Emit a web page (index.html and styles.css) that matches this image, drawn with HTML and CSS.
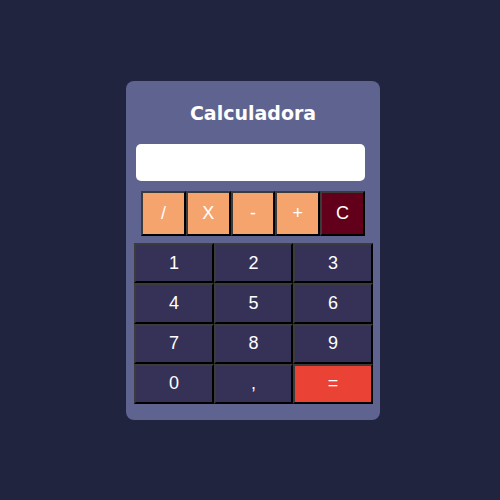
FILE: index.html
```html
<!DOCTYPE html>
<html lang="pt">
<head>
<meta charset="utf-8">
<title>Calculadora</title>
<link rel="stylesheet" href="styles.css">
</head>
<body>
<div class="calc">
  <h1 class="title">Calculadora</h1>
  <div class="display"></div>
  <div class="ops">
    <button class="btn op">/</button>
    <button class="btn op">X</button>
    <button class="btn op">-</button>
    <button class="btn op">+</button>
    <button class="btn clear">C</button>
  </div>
  <div class="keys">
    <button class="btn num">1</button>
    <button class="btn num">2</button>
    <button class="btn num">3</button>
    <button class="btn num">4</button>
    <button class="btn num">5</button>
    <button class="btn num">6</button>
    <button class="btn num">7</button>
    <button class="btn num">8</button>
    <button class="btn num">9</button>
    <button class="btn num">0</button>
    <button class="btn num">,</button>
    <button class="btn eq">=</button>
  </div>
</div>
</body>
</html>
```
FILE: styles.css
```css
html, body {
  margin: 0;
  padding: 0;
}
body {
  background: #21243f;
  min-height: 500px;
  padding: 81px 0 0 126px;
  box-sizing: border-box;
  font-family: "Liberation Sans", Arial, sans-serif;
}
.calc {
  width: 254px;
  height: 339px;
  background: #5f638f;
  border-radius: 8px;
  display: flex;
  flex-direction: column;
  align-items: flex-start;
}
.title {
  margin: 20px 0 0 0;
  width: 100%;
  text-align: center;
  font-family: "DejaVu Sans", sans-serif;
  font-weight: 700;
  font-size: 19px;
  line-height: 24px;
  color: #ffffff;
  letter-spacing: 0;
}
.display {
  margin: 19px 0 0 10px;
  width: 229px;
  height: 37px;
  background: #ffffff;
  border-radius: 5px;
}
.ops {
  margin: 10px 0 0 15px;
  width: 224px;
  height: 45px;
  display: flex;
}
.ops .btn {
  flex: 1;
}
.keys {
  margin: 7px 0 0 8px;
  width: 239px;
  height: 161px;
  display: grid;
  grid-template-columns: 80px 79px 80px;
  grid-template-rows: repeat(4, 1fr);
}
.btn {
  margin: 0;
  padding: 0;
  border: 2px solid;
  border-color: #3b3b3b #000000 #000000 #3b3b3b;
  font-family: "Liberation Sans", Arial, sans-serif;
  font-size: 18px;
  color: #ffffff;
  box-sizing: border-box;
}
.op {
  background: #f4a46c;
}
.clear {
  background: #62001b;
}
.num {
  background: #363257;
}
.eq {
  background: #ea4335;
}
```
